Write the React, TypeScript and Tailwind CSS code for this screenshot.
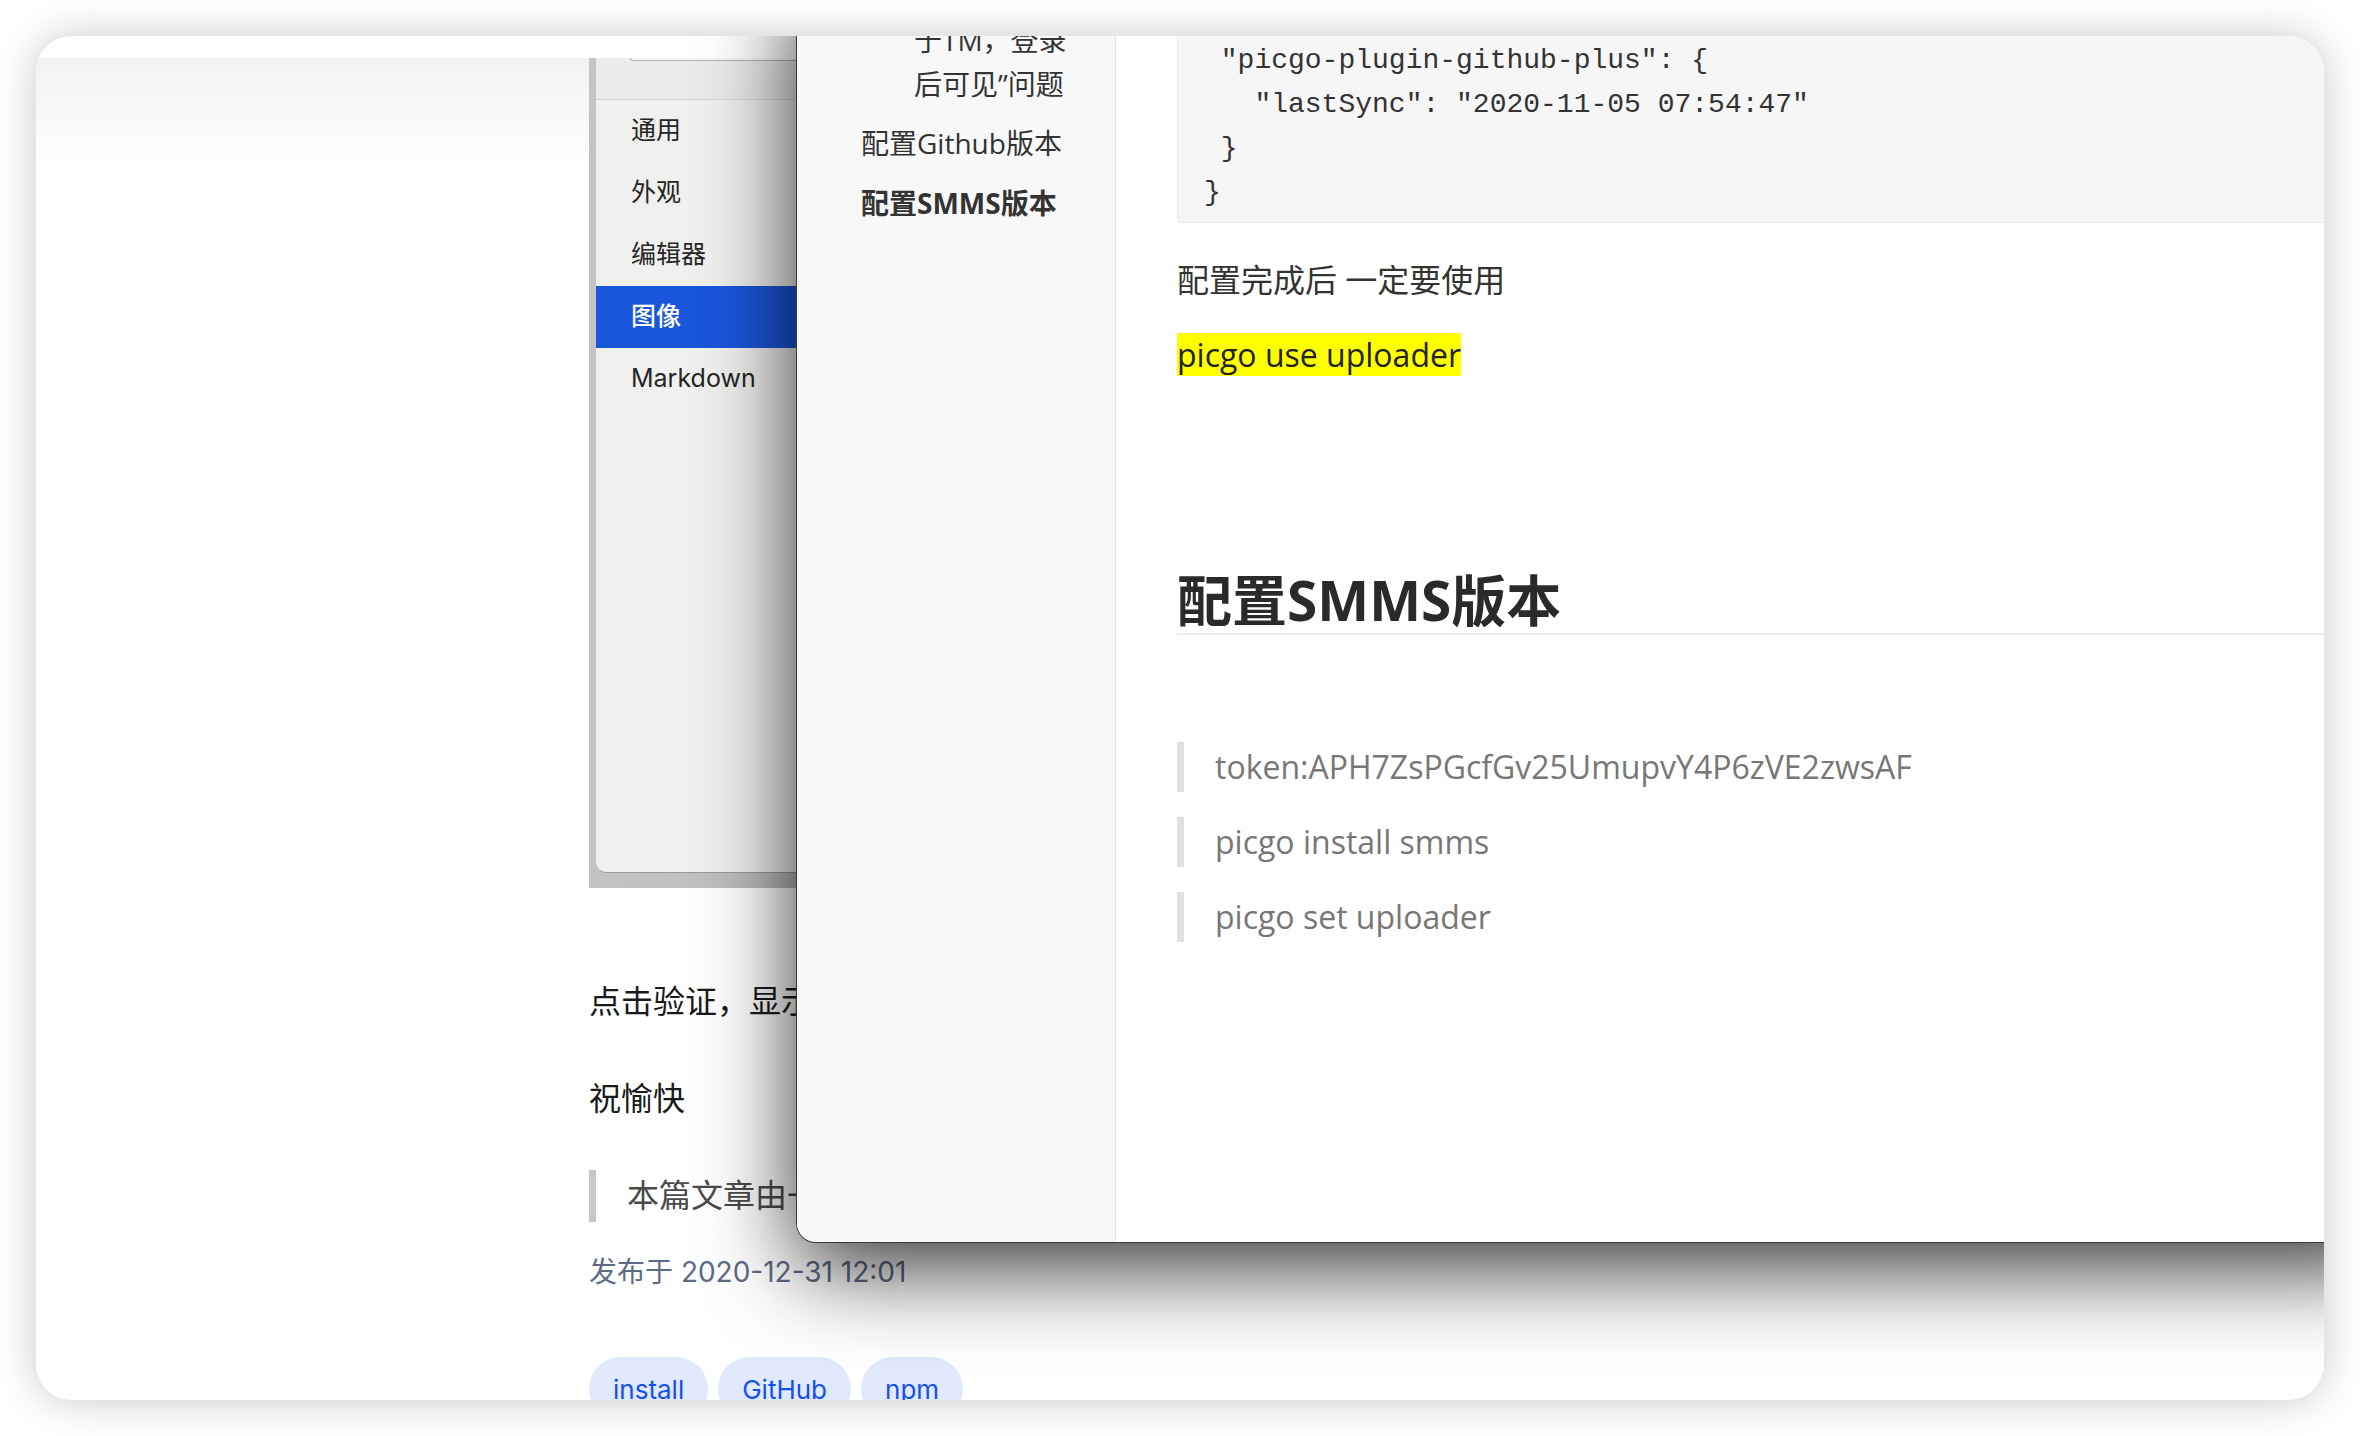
import React from "react";

const SANS = "font-['Inter','Noto_Sans_CJK_SC',sans-serif]";
const OPEN = "font-['Open_Sans','Noto_Sans_CJK_SC',sans-serif]";
const MONO = "font-['Liberation_Mono','DejaVu_Sans_Mono',monospace]";

function PrefsImage() {
  const items = ["通用", "外观", "编辑器", "图像", "Markdown"];
  return (
    <div className="flex h-[830px] w-[700px] shrink-0 bg-[linear-gradient(to_right,#c4c4c4,#a8a8a8)]">
      <div className="ml-[7px] flex h-[815px] flex-1 flex-col rounded-bl-[10px] border-b border-[#9a9a9a] bg-[#f0f0ee]">
        <div className="h-[42px] shrink-0 border-b border-[#d6d6d4] bg-[#ebebea]">
          <div className="ml-[34px] h-[3px] rounded-bl-[6px] border-b border-l border-[#b4b4b4] bg-[#f7f7f7]" />
        </div>
        {items.map((t, i) => (
          <div
            key={t}
            className={
              i === 3
                ? `flex h-[62px] shrink-0 items-center bg-[#1a56db] pl-[35px] text-[25px] font-medium text-white ${SANS}`
                : `flex h-[62px] shrink-0 items-center pl-[35px] text-[25px] text-[#262626] ${SANS}`
            }
          >
            {t}
          </div>
        ))}
      </div>
    </div>
  );
}

function TyporaWindow() {
  return (
    <div className="absolute left-[760px] top-[-60px] flex h-[1267px] w-[1600px] overflow-hidden rounded-bl-[20px] border-b border-l border-[#3a3a3a] bg-white shadow-[0_24px_90px_rgba(0,0,0,0.8)]">
      {/* sidebar outline */}
      <div className={`flex w-[319px] shrink-0 flex-col border-r border-[#e4e4e4] bg-[#f8f8f8] pt-[42px] text-[28px] leading-[44px] text-[#333] ${OPEN}`}>
        <div className="pl-[117px]">于TM，登录</div>
        <div className="pl-[117px]">后可见”问题</div>
        <div className="mt-[15px] pl-[64px]">配置Github版本</div>
        <div className="mt-[16px] pl-[64px] font-bold">配置SMMS版本</div>
      </div>
      {/* main */}
      <div className={`flex flex-1 flex-col pl-[61px] text-[#333] ${OPEN}`}>
        <pre className={`shrink-0 rounded-[4px] border border-[#e6e8eb] bg-[#f6f6f6] pb-[7px] pl-[26px] pt-[62px] text-[28px] leading-[44px] text-[#333] ${MONO}`}>
{` "picgo-plugin-github-plus": {
   "lastSync": "2020-11-05 07:54:47"
 }
}`}
        </pre>
        <p className="mt-[32px] shrink-0 text-[32px] leading-[50px]">配置完成后 一定要使用</p>
        <p className="mt-[25px] shrink-0 text-[32px] leading-[50px]">
          <mark className="bg-[#ffff00] text-[#222]">picgo use uploader</mark>
        </p>
        <h2 className="mt-[186px] shrink-0 border-b-2 border-[#ececec] text-[55px] font-bold leading-[67px] text-[#2a2a2a]">
          配置SMMS版本
        </h2>
        {[
          "token:APH7ZsPGcfGv25UmupvY4P6zVE2zwsAF",
          "picgo install smms",
          "picgo set uploader",
        ].map((t, i) => (
          <blockquote
            key={t}
            className={
              i === 0
                ? "mt-[107px] shrink-0 border-l-[7px] border-[#dfe2e5] pl-[31px] text-[32px] leading-[50px] text-[#777]"
                : "mt-[25px] shrink-0 border-l-[7px] border-[#dfe2e5] pl-[31px] text-[32px] leading-[50px] text-[#777]"
            }
          >
            {t}
          </blockquote>
        ))}
      </div>
    </div>
  );
}

export default function App() {
  return (
    <div className="h-[1436px] w-[2360px] overflow-hidden bg-white pl-[36px] pt-[36px]">
      <div className="relative h-[1364px] w-[2288px] overflow-hidden rounded-[36px] bg-white shadow-[0_0_40px_rgba(0,0,0,0.22)]">
        <div className="h-[22px] bg-white" />
        <div className={`flex flex-col bg-[linear-gradient(to_bottom,#f2f2f2,#ffffff_110px)] pb-[40px] pl-[553px] ${SANS}`}>
          <PrefsImage />
          <p className="mt-[90px] shrink-0 text-[32px] leading-[48px] text-[#1a1a1a]">点击验证，显示上传成功即可</p>
          <p className="mt-[49px] shrink-0 text-[32px] leading-[48px] text-[#1a1a1a]">祝愉快</p>
          <blockquote className="mt-[47px] h-[52px] shrink-0 border-l-[7px] border-[#c8c8c8] pl-[31px] text-[32px] leading-[52px] text-[#4a4a4a]">
            本篇文章由一文多发平台ArtiPub自动发布
          </blockquote>
          <div className="mt-[30px] shrink-0 text-[28px] leading-[40px] text-[#5f6b85]">发布于 2020-12-31 12:01</div>
          <div className="mt-[65px] flex shrink-0 gap-[10px]">
            {["install", "GitHub", "npm"].map((t) => (
              <span
                key={t}
                className="flex h-[64px] items-center rounded-full bg-[#e1e9fc] px-[24px] text-[26px] text-[#1550f0]"
              >
                {t}
              </span>
            ))}
          </div>
        </div>
        <TyporaWindow />
      </div>
    </div>
  );
}
